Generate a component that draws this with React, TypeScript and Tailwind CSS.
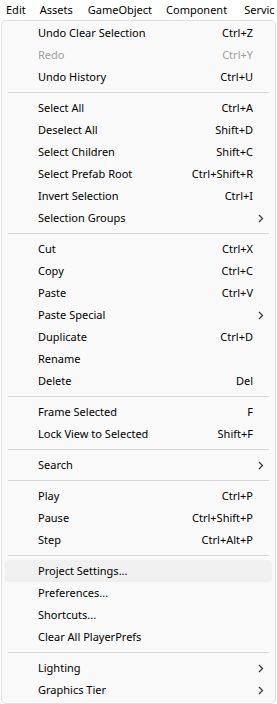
type Item = { label: string; shortcut?: string; sub?: boolean; disabled?: boolean; active?: boolean } | "sep"

const items: Item[] = [
  { label: "Undo Clear Selection", shortcut: "Ctrl+Z" },
  { label: "Redo", shortcut: "Ctrl+Y", disabled: true },
  { label: "Undo History", shortcut: "Ctrl+U" },
  "sep",
  { label: "Select All", shortcut: "Ctrl+A" },
  { label: "Deselect All", shortcut: "Shift+D" },
  { label: "Select Children", shortcut: "Shift+C" },
  { label: "Select Prefab Root", shortcut: "Ctrl+Shift+R" },
  { label: "Invert Selection", shortcut: "Ctrl+I" },
  { label: "Selection Groups", sub: true },
  "sep",
  { label: "Cut", shortcut: "Ctrl+X" },
  { label: "Copy", shortcut: "Ctrl+C" },
  { label: "Paste", shortcut: "Ctrl+V" },
  { label: "Paste Special", sub: true },
  { label: "Duplicate", shortcut: "Ctrl+D" },
  { label: "Rename" },
  { label: "Delete", shortcut: "Del" },
  "sep",
  { label: "Frame Selected", shortcut: "F" },
  { label: "Lock View to Selected", shortcut: "Shift+F" },
  "sep",
  { label: "Search", sub: true },
  "sep",
  { label: "Play", shortcut: "Ctrl+P" },
  { label: "Pause", shortcut: "Ctrl+Shift+P" },
  { label: "Step", shortcut: "Ctrl+Alt+P" },
  "sep",
  { label: "Project Settings...", active: true },
  { label: "Preferences..." },
  { label: "Shortcuts..." },
  { label: "Clear All PlayerPrefs" },
  "sep",
  { label: "Lighting", sub: true },
  { label: "Graphics Tier", sub: true },
]

function Chevron() {
  return (
    <svg width="6" height="9" viewBox="0 0 6 9" className="text-[#333]">
      <path d="M1 1l3.5 3.5L1 8" fill="none" stroke="currentColor" strokeWidth="1.2" />
    </svg>
  )
}

export default function App() {
  return (
    <div className="w-[277px] h-[704px] bg-white overflow-hidden text-[11px] text-black" style={{ fontFamily: '"Noto Sans", "Open Sans", sans-serif' }}>
      <div className="flex h-[20px] items-center whitespace-nowrap overflow-hidden">
        <span className="pl-[6px] pr-[14px]">Edit</span>
        <span className="pr-[15px]">Assets</span>
        <span className="pr-[14px]">GameObject</span>
        <span className="pr-[17px]">Component</span>
        <span>Servic</span>
      </div>
      <div className="ml-[1px] w-[275px] h-[684px] bg-[#f9f9f9] border border-[#e0e0e0] rounded-t-[5px] rounded-b-[5px] px-[3px] pt-[1px]">
        {items.map((it, i) =>
          it === "sep" ? (
            <div key={i} className="h-[9px] flex items-center px-[3px]">
              <div className="h-px w-full bg-[#d6d6d6]" />
            </div>
          ) : (
            <div
              key={i}
              className={`h-[22px] flex items-center pl-[33px] rounded-[4px] ${it.active ? "bg-[#f0f0f0]" : ""} ${it.disabled ? "text-[#a0a0a0]" : ""}`}
            >
              <span className="flex-1">{it.label}</span>
              {it.shortcut && <span>{it.shortcut}</span>}
              <span className="w-[19px] flex justify-end pr-[8px]">{it.sub && <Chevron />}</span>
            </div>
          )
        )}
      </div>
    </div>
  )
}
